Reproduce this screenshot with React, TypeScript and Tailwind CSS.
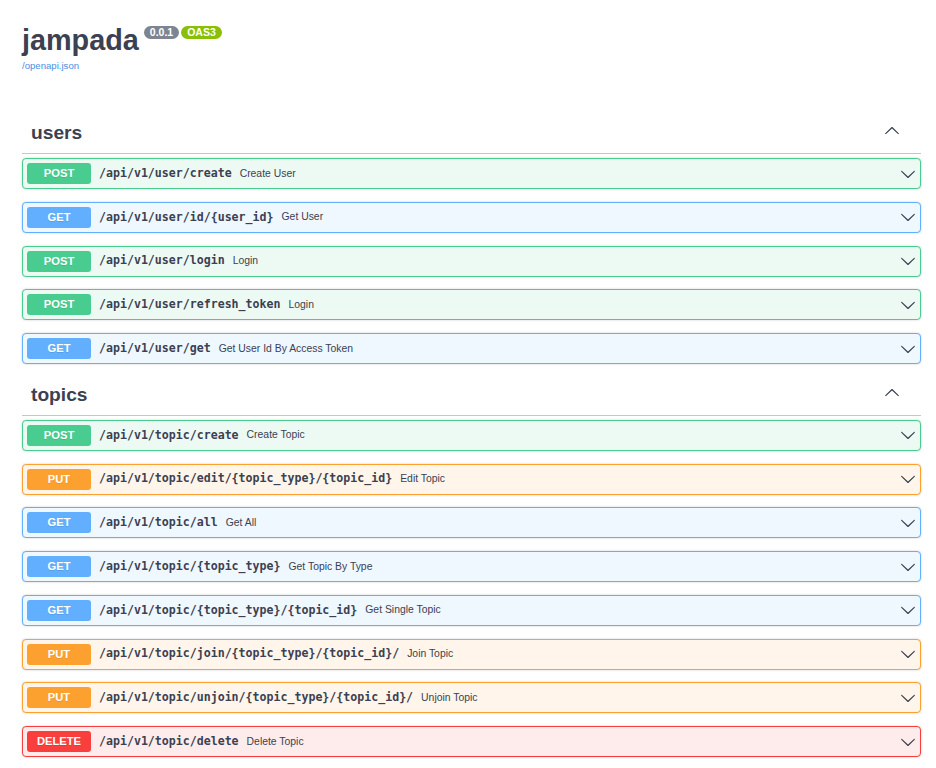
import type { ReactNode } from "react";

type Method = "GET" | "POST" | "PUT" | "DELETE";

type Operation = {
  method: Method;
  path: string;
  summary: string;
};

type Tag = {
  name: string;
  operations: Operation[];
};

const methodStyles: Record<Method, { block: string; badge: string }> = {
  GET: { block: "border-[#61affe] bg-[#eff7ff]", badge: "bg-[#61affe]" },
  POST: { block: "border-[#49cc90] bg-[#edfaf4]", badge: "bg-[#49cc90]" },
  PUT: { block: "border-[#fca130] bg-[#fff5ea]", badge: "bg-[#fca130]" },
  DELETE: { block: "border-[#f93e3e] bg-[#feecec]", badge: "bg-[#f93e3e]" },
};

const tags: Tag[] = [
  {
    name: "users",
    operations: [
      { method: "POST", path: "/api/v1/user/create", summary: "Create User" },
      { method: "GET", path: "/api/v1/user/id/{user_id}", summary: "Get User" },
      { method: "POST", path: "/api/v1/user/login", summary: "Login" },
      { method: "POST", path: "/api/v1/user/refresh_token", summary: "Login" },
      { method: "GET", path: "/api/v1/user/get", summary: "Get User Id By Access Token" },
    ],
  },
  {
    name: "topics",
    operations: [
      { method: "POST", path: "/api/v1/topic/create", summary: "Create Topic" },
      { method: "PUT", path: "/api/v1/topic/edit/{topic_type}/{topic_id}", summary: "Edit Topic" },
      { method: "GET", path: "/api/v1/topic/all", summary: "Get All" },
      { method: "GET", path: "/api/v1/topic/{topic_type}", summary: "Get Topic By Type" },
      { method: "GET", path: "/api/v1/topic/{topic_type}/{topic_id}", summary: "Get Single Topic" },
      { method: "PUT", path: "/api/v1/topic/join/{topic_type}/{topic_id}/", summary: "Join Topic" },
      { method: "PUT", path: "/api/v1/topic/unjoin/{topic_type}/{topic_id}/", summary: "Unjoin Topic" },
      { method: "DELETE", path: "/api/v1/topic/delete", summary: "Delete Topic" },
    ],
  },
];

const arrowPath =
  "M17.418 6.109c.272-.268.709-.268.979 0s.271.701 0 .969l-7.908 7.83c-.27.268-.707.268-.979 0l-7.908-7.83c-.27-.268-.27-.701 0-.969.271-.268.709-.268.979 0L10 13.25l7.418-7.141z";

function Arrow({ up = false, className = "" }: { up?: boolean; className?: string }) {
  return (
    <svg
      viewBox="0 0 20 20"
      width={16}
      height={16}
      className={`shrink-0 fill-[#3b4151] ${up ? "rotate-180" : ""} ${className}`}
      aria-hidden="true"
    >
      <path d={arrowPath} />
    </svg>
  );
}

function Badge({ children, color }: { children: ReactNode; color: string }) {
  return (
    <span
      className={`flex h-[13px] items-center rounded-full px-[6px] text-[10.5px] font-bold leading-none text-white ${color}`}
    >
      {children}
    </span>
  );
}

function OperationRow({ op }: { op: Operation }) {
  const style = methodStyles[op.method];
  return (
    <div
      className={`mb-[12.75px] flex h-[31px] items-center rounded-[4px] border px-[4px] shadow-[0_0_2.4px_rgba(0,0,0,0.19)] ${style.block}`}
    >
      <span
        className={`flex h-[21px] w-[64px] shrink-0 items-center justify-center rounded-[3px] text-[11.2px] font-bold text-white [text-shadow:0_1px_0_rgba(0,0,0,0.1)] ${style.badge}`}
      >
        {op.method}
      </span>
      <span className="px-[8px] font-['DejaVu_Sans_Mono',monospace] text-[11.6px] font-semibold text-[#3b4151]">
        {op.path}
      </span>
      <span className="text-[10.4px] text-[#3b4151]">{op.summary}</span>
      <Arrow className="ml-auto" />
    </div>
  );
}

function TagSection({ tag }: { tag: Tag }) {
  return (
    <section>
      <h3 className="mb-[4px] flex h-[39px] items-center border-b border-[rgba(59,65,81,0.3)] pl-[9px] pr-[21px]">
        <span className="pb-[3px] text-[19.2px] font-bold leading-none text-[#3b4151]">{tag.name}</span>
        <Arrow up className="mb-[6px] ml-auto" />
      </h3>
      {tag.operations.map((op) => (
        <OperationRow key={`${op.method}-${op.path}`} op={op} />
      ))}
    </section>
  );
}

export default function App() {
  return (
    <div className="min-h-screen bg-white pl-[22px] pr-[15px] pt-[26px] font-['Liberation_Sans',Arial,sans-serif] text-[#3b4151]">
      <div className="flex items-start">
        <h1 className="text-[28.8px] font-bold leading-[29px] text-[#3b4151]">jampada</h1>
        <div className="ml-[5px] flex gap-[2px]">
          <Badge color="bg-[#7d8492]">0.0.1</Badge>
          <Badge color="bg-[#89bf04]">OAS3</Badge>
        </div>
      </div>
      <a className="mt-[5px] block text-[9.6px] leading-[12px] text-[#4990e2]">/openapi.json</a>

      <div className="mt-[43px]">
        {tags.map((tag) => (
          <TagSection key={tag.name} tag={tag} />
        ))}
      </div>
    </div>
  );
}
